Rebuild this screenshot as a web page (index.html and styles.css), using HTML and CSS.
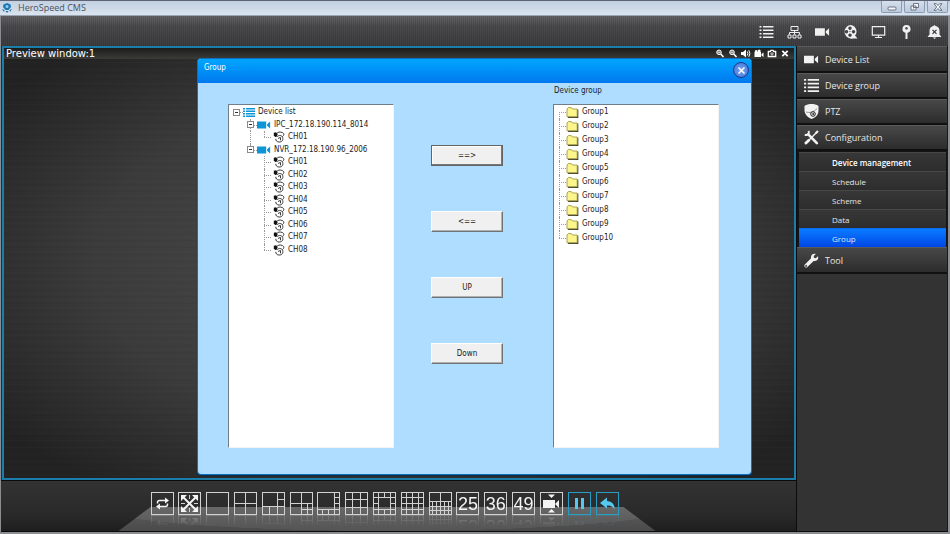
FILE: index.html
```html
<!DOCTYPE html>
<html lang="en">
<head>
<meta charset="utf-8">
<title>HeroSpeed CMS</title>
<link rel="stylesheet" href="styles.css">
</head>
<body>
<svg class="sprite" aria-hidden="true">
  <symbol id="list" viewBox="0 0 14 14"><path fill="currentColor" d="M0 1h2v1.500H0zM3.500 1H14v1.500H3.500zM0 4.500h2V6H0zM3.500 4.500H14V6H3.500zM0 8h2v1.500H0zM3.500 8H14v1.500H3.500zM0 11.500h2V13H0zM3.500 11.500H14V13H3.500z"/></symbol>
  <symbol id="rows" viewBox="0 0 12 10"><path fill="currentColor" d="M0 1h2v1.500H0zM3 1h9v1.500H3zM0 3.500h2V5H0zM3 3.500h9V5H3zM0 6h2v1.500H0zM3 6h9v1.500H3zM0 8.500h2V10H0zM3 8.500h9V10H3z"/></symbol>
  <symbol id="cam" viewBox="0 0 16 10"><path fill="currentColor" d="M0 1h10.500v8H0zM11.500 4.200L15 1v8l-3.500-3.200z"/></symbol>
  <symbol id="net" viewBox="0 0 14 14"><g fill="none" stroke="currentColor"><path d="M3.500 1.500h7v4h-7zM7 5.500v4M2 9.500V7.500h10v2M.5 10h3v3h-3zM5.500 10h3v3h-3zM10.500 10h3v3h-3z"/></g></symbol>
  <symbol id="reel" viewBox="0 0 14 14"><path fill="currentColor" fill-rule="evenodd" d="M6.500 0a6.500 6.500 0 0 1 5 10.600L14 13.500H9.500A6.500 6.500 0 1 1 6.500 0zM6.500 1.500a1.700 1.700 0 1 0 .01 0zM3 5a1.700 1.700 0 1 0 .01 0zM10 5a1.700 1.700 0 1 0 .01 0zM6.500 8.400a1.700 1.700 0 1 0 .01 0zM6.500 5.900a.6.600 0 1 0 .01 0z"/></symbol>
  <symbol id="screen" viewBox="0 0 14 14"><path fill="none" stroke="currentColor" stroke-width="1.200" d="M.8 1.600h12.400v8.600H.8zM7 10v2M3.500 12.500h7"/></symbol>
  <symbol id="pin" viewBox="0 0 14 14"><path fill="currentColor" fill-rule="evenodd" d="M7 0a3.900 3.900 0 0 1 1 7.700V14H6V7.700A3.900 3.900 0 0 1 7 0zM7 2a1.300 1.300 0 1 0 .01 0z"/></symbol>
  <symbol id="bell" viewBox="0 0 14 14"><path fill="currentColor" d="M7 0l1.200 1C11 1.500 12 3.500 12 6v3.500L14 12H0l2-2.500V6c0-2.500 1-4.500 3.800-5zM5.200 12.500h3.600L7 14z"/><path stroke="#333" stroke-width="1.200" d="M5 4.800l4 4M9 4.800l-4 4"/></symbol>
  <symbol id="dome" viewBox="0 0 14 15"><path fill="currentColor" d="M0 2C2 .5 4.500 0 7 0s5 .5 7 2v4c0 4-2 7.500-7 9C3 13.500 0 10 0 6z"/><path fill="none" stroke="#777" stroke-width=".8" d="M1.500 8C5 9 9 8.500 12.500 4.500"/><circle cx="8.500" cy="10" r="2.300" fill="#eee" stroke="#222"/><circle cx="8.700" cy="10" r=".9" fill="#222"/></symbol>
  <symbol id="tools" viewBox="0 0 14 14"><path stroke="currentColor" stroke-width="2.400" stroke-linecap="round" d="M4 4l8 8.300"/><path stroke="currentColor" stroke-width="1.300" d="M5 9L11.500 2.500"/><path stroke="currentColor" stroke-width="2.600" stroke-linecap="round" d="M1.800 12.200l2.700-2.600"/><path fill="none" stroke="currentColor" stroke-width="1.800" d="M4.300.8c.9 3-.8 4.400-3.600 3.600"/><path stroke="currentColor" stroke-width="2" d="M11 3l2-2"/></symbol>
  <symbol id="wrench" viewBox="0 0 14 14"><path fill="currentColor" d="M12.900 3L11 4.800 9.300 4.500 9 2.900 11 1C8.500 0 6 2 6.600 5L.8 10.700c-1.400 1.500.8 3.900 2.400 2.400L9 7.400c3.200.6 5.200-2 3.900-4.400zM2 12.800a.8.800 0 1 1 .01 0z"/></symbol>
  <symbol id="zin" viewBox="0 0 9 9"><circle cx="3.500" cy="3.300" r="2.300" fill="#777" stroke="currentColor"/><path stroke="currentColor" stroke-width="1.600" d="M5.200 5L8 8"/><path stroke="currentColor" stroke-width=".8" d="M2.200 3.300h2.600"/></symbol>
  <symbol id="sound" viewBox="0 0 10 9"><path fill="currentColor" d="M0 3h2L5 .5v8L2 6H0z"/><path fill="none" stroke="currentColor" d="M6.300 2.500q1.200 2 0 4M7.800 1.200q2.200 3.300 0 6.600"/></symbol>
  <symbol id="rec" viewBox="0 0 9 9"><path fill="currentColor" d="M0 3h6.500v5H0zM7 5l2-1.500v4.500L7 6.500z"/><circle cx="1.700" cy="2.300" r="1.300" fill="currentColor"/><circle cx="4.700" cy="2.100" r="1.500" fill="currentColor"/></symbol>
  <symbol id="photo" viewBox="0 0 9 9"><path fill="none" stroke="currentColor" stroke-width="1.300" d="M.8 2.500h2l.6-1.200h2.200l.6 1.200h2v5H.8z"/><circle cx="4.500" cy="4.900" r="1.100" fill="none" stroke="currentColor" stroke-width=".8"/></symbol>
  <symbol id="cross" viewBox="0 0 9 9"><path stroke="currentColor" stroke-width="1.800" d="M1.800 1.800l5.400 5.400M7.200 1.800L1.800 7.200"/></symbol>
  <symbol id="chan" viewBox="0 0 12 12"><g fill="none" stroke="#222" stroke-width=".9"><path d="M3.500 3C4.500.8 7 .6 9.500 1.600c2 .9 1.500 3 0 3.900"/><path d="M4 5.800C6 3.600 9 4.200 9.700 6.500c.8 3-1.200 4.700-3.700 4.500-2.300-.1-3.300-1.500-3.200-3.200"/><path d="M5 7.500l2.500-1.200M7.500 6.500v2.800"/></g><path fill="#111" d="M.8 1.800l2.400-.6 1.300 2.300-.8 2.300-1.500.2L.8 4.500z"/></symbol>
  <symbol id="folder" viewBox="0 0 12 11"><path fill="#333" d="M2 2.500h9.800V11H1.500z"/><path fill="#fbf58c" stroke="#a19a45" stroke-width=".9" d="M.5 2L1.800.6h3L6 2h4.700v7.800H.5z"/></symbol>
</svg>

<header class="titlebar">
  <svg class="logo" viewBox="0 0 10 10"><path fill="#1b76b5" d="M5 0l3.500 1.500L9 4 6.500 7h-3L1 4l.5-2.500z"/><circle cx="5" cy="3.500" r="1.500" fill="#8fd0f5"/><path fill="#1b76b5" d="M0 6l2.500 1L2 9zM10 6L7.500 7 8 9zM3.500 8h3L5 10z"/></svg>
  <h1>HeroSpeed CMS</h1>
  <div class="winbtns">
    <button aria-label="Minimize"><svg viewBox="0 0 10 8"><rect x="1" y="4" width="8" height="3" rx="1"/></svg></button>
    <button aria-label="Restore"><svg viewBox="0 0 10 8"><path d="M3.500.5h5v4h-5zM1 3h5v4H1zM3 5h1"/></svg></button>
    <button aria-label="Close"><svg viewBox="0 0 10 8"><path d="M1 .7h2.300L5 2.500 6.700.7H9L6.300 4 9 7.300H6.700L5 5.500 3.300 7.300H1L3.700 4z"/></svg></button>
  </div>
</header>

<div class="app">
  <nav class="topbar" aria-label="Main">
    <button aria-label="List"><svg><use href="#list"/></svg></button>
    <button aria-label="Network"><svg><use href="#net"/></svg></button>
    <button aria-label="Camera"><svg><use href="#cam"/></svg></button>
    <button aria-label="Playback"><svg><use href="#reel"/></svg></button>
    <button aria-label="Monitor"><svg><use href="#screen"/></svg></button>
    <button aria-label="Map"><svg><use href="#pin"/></svg></button>
    <button aria-label="Alarm"><svg><use href="#bell"/></svg></button>
  </nav>

  <div class="workspace">
    <main class="stage">
      <section class="preview">
        <header class="preview-head">
          <h2>Preview window:1</h2>
          <div class="preview-tools">
            <button aria-label="Zoom in"><svg><use href="#zin"/></svg></button>
            <button aria-label="Zoom out"><svg><use href="#zin"/></svg></button>
            <button aria-label="Sound"><svg><use href="#sound"/></svg></button>
            <button aria-label="Record"><svg><use href="#rec"/></svg></button>
            <button aria-label="Snapshot"><svg><use href="#photo"/></svg></button>
            <button aria-label="Close preview"><svg><use href="#cross"/></svg></button>
          </div>
        </header>
      </section>

      <footer class="dock">
        <div class="layouts">
          <button aria-label="Cycle"><svg viewBox="0 0 23 23"><path class="mid-stroke" d="M6.500 11.500v-1q0-2 2-2h7M16.500 11.500v1q0 2-2 2h-7"/><path class="solid" d="M14 5.500l4 3-4 3zM9 11.500l-4 3 4 3z"/></svg></button>
          <button aria-label="Full screen"><svg viewBox="0 0 23 23"><path class="thick" d="M5 5l13 13M18 5L5 18"/><path class="solid" d="M3 3h6L3 9zM20 3v6L14 3zM3 20v-6l6 6zM20 20h-6l6-6z"/><path d="M11.500 3v4M11.500 16v4M3 11.500h4M16 11.500h4"/></svg></button>
          <button aria-label="1 window"></button>
          <button aria-label="4 windows"><svg viewBox="0 0 23 23"><path d="M11.500 0v23M0 11.500h23"/></svg></button>
          <button aria-label="6 windows"><svg viewBox="0 0 23 23"><path d="M15.500 0v23M0 14.500h23M7.500 14.500V23M15.500 7.500H23"/></svg></button>
          <button aria-label="7 windows"><svg viewBox="0 0 23 23"><path d="M11.500 0v23M0 11.500h23M17.500 11.500V23M11.500 17.500H23"/></svg></button>
          <button aria-label="8 windows"><svg viewBox="0 0 23 23"><path d="M17.500 0v23M0 17.500h23M5.500 17.500V23M11.500 17.500V23M17.500 5.500H23M17.500 11.500H23"/></svg></button>
          <button aria-label="9 windows"><svg viewBox="0 0 23 23"><path d="M7.500 0v23M15.500 0v23M0 7.500h23M0 15.500h23"/></svg></button>
          <button aria-label="13 windows"><svg viewBox="0 0 23 23"><path d="M5.500 0v23M17.500 0v23M0 5.500h23M0 17.500h23M11.500 0v5.500M11.500 17.500V23M0 11.500h5.500M17.500 11.500H23"/></svg></button>
          <button aria-label="16 windows"><svg viewBox="0 0 23 23"><path d="M5.500 0v23M11.500 0v23M17.500 0v23M0 5.500h23M0 11.500h23M0 17.500h23"/></svg></button>
          <button aria-label="20 windows"><svg viewBox="0 0 23 23"><path d="M11.500 0v23M0 9.500h23M0 14.500h23M0 18.500h23M3.500 9.500V23M7.500 9.500V23M15.500 9.500V23M19.500 9.500V23"/></svg></button>
          <button>25</button>
          <button>36</button>
          <button>49</button>
          <button aria-label="Camera tilt"><svg viewBox="0 0 23 23"><path class="solid" d="M3 8h12v8H3zM15 12l4-4v8zM8 2.500h7L11.500 6zM8 20.500h7L11.500 17z"/></svg></button>
          <button class="blue" aria-label="Pause"><svg viewBox="0 0 23 23"><path class="solid" d="M7 6h3v11H7zM13 6h3v11h-3z"/></svg></button>
          <button class="blue" aria-label="Back"><svg viewBox="0 0 23 23"><path class="solid" d="M4 11l7-5.500V9q8 .5 7.500 8.500Q16 13 11 13.500v3z"/></svg></button>
        </div>
      </footer>
    </main>

    <aside class="sidebar">
      <a class="entry" href="#"><svg class="wide"><use href="#cam"/></svg>Device List</a>
      <a class="entry" href="#"><svg><use href="#list"/></svg>Device group</a>
      <a class="entry" href="#"><svg><use href="#dome"/></svg>PTZ</a>
      <a class="entry" href="#"><svg><use href="#tools"/></svg>Configuration</a>
      <div class="submenu">
        <a class="strong" href="#">Device management</a>
        <a href="#">Schedule</a>
        <a href="#">Scheme</a>
        <a href="#">Data</a>
        <a class="current" href="#" aria-current="page">Group</a>
      </div>
      <a class="entry" href="#"><svg><use href="#wrench"/></svg>Tool</a>
    </aside>
  </div>
</div>

<div class="dialog" role="dialog" aria-labelledby="dialog-title">
  <header class="dialog-head">
    <h2 id="dialog-title">Group</h2>
    <button class="close" aria-label="Close dialog"><svg viewBox="0 0 9 9"><path d="M1.500 1.500l6 6M7.500 1.500l-6 6"/></svg></button>
  </header>
  <div class="dialog-body">
    <h3 id="group-label">Device group</h3>
    <ul class="tree devices">
      <li><span class="cell"><button class="minus" aria-label="Collapse"></button></span><svg class="ico root"><use href="#rows"/></svg>Device list</li>
      <li><span class="cell gap"></span><span class="cell mid"><button class="minus" aria-label="Collapse"></button></span><svg class="ico"><use href="#cam"/></svg>IPC_172.18.190.114_8014</li>
      <li><span class="cell gap"></span><span class="cell line"></span><span class="cell last"></span><svg class="ico chan"><use href="#chan"/></svg>CH01</li>
      <li><span class="cell gap"></span><span class="cell last"><button class="minus" aria-label="Collapse"></button></span><svg class="ico"><use href="#cam"/></svg>NVR_172.18.190.96_2006</li>
      <li><span class="cell gap"></span><span class="cell gap"></span><span class="cell mid"></span><svg class="ico chan"><use href="#chan"/></svg>CH01</li>
      <li><span class="cell gap"></span><span class="cell gap"></span><span class="cell mid"></span><svg class="ico chan"><use href="#chan"/></svg>CH02</li>
      <li><span class="cell gap"></span><span class="cell gap"></span><span class="cell mid"></span><svg class="ico chan"><use href="#chan"/></svg>CH03</li>
      <li><span class="cell gap"></span><span class="cell gap"></span><span class="cell mid"></span><svg class="ico chan"><use href="#chan"/></svg>CH04</li>
      <li><span class="cell gap"></span><span class="cell gap"></span><span class="cell mid"></span><svg class="ico chan"><use href="#chan"/></svg>CH05</li>
      <li><span class="cell gap"></span><span class="cell gap"></span><span class="cell mid"></span><svg class="ico chan"><use href="#chan"/></svg>CH06</li>
      <li><span class="cell gap"></span><span class="cell gap"></span><span class="cell mid"></span><svg class="ico chan"><use href="#chan"/></svg>CH07</li>
      <li><span class="cell gap"></span><span class="cell gap"></span><span class="cell last"></span><svg class="ico chan"><use href="#chan"/></svg>CH08</li>
    </ul>
    <div class="actions">
      <button class="default">==&gt;</button>
      <button>&lt;==</button>
      <button>UP</button>
      <button>Down</button>
    </div>
    <ul class="tree groups" aria-labelledby="group-label">
      <li><span class="cell first"></span><svg class="ico"><use href="#folder"/></svg>Group1</li>
      <li><span class="cell mid"></span><svg class="ico"><use href="#folder"/></svg>Group2</li>
      <li><span class="cell mid"></span><svg class="ico"><use href="#folder"/></svg>Group3</li>
      <li><span class="cell mid"></span><svg class="ico"><use href="#folder"/></svg>Group4</li>
      <li><span class="cell mid"></span><svg class="ico"><use href="#folder"/></svg>Group5</li>
      <li><span class="cell mid"></span><svg class="ico"><use href="#folder"/></svg>Group6</li>
      <li><span class="cell mid"></span><svg class="ico"><use href="#folder"/></svg>Group7</li>
      <li><span class="cell mid"></span><svg class="ico"><use href="#folder"/></svg>Group8</li>
      <li><span class="cell mid"></span><svg class="ico"><use href="#folder"/></svg>Group9</li>
      <li><span class="cell last"></span><svg class="ico"><use href="#folder"/></svg>Group10</li>
    </ul>
  </div>
</div>
</body>
</html>
```
FILE: styles.css
```css
* { box-sizing: border-box; }

body {
  margin: 0;
  height: 100vh;
  display: flex;
  flex-direction: column;
  overflow: hidden;
  background: #8b8d90;
  color: #e6e6e6;
  font-family: "Noto Sans", sans-serif;
  font-size: 9px;
}

h1, h2, h3, ul { margin: 0; padding: 0; font-weight: normal; }
ul { list-style: none; }
a { color: inherit; text-decoration: none; }
button { margin: 0; padding: 0; border: 0; background: none; color: inherit; font: inherit; }
.sprite { position: absolute; width: 0; height: 0; }

/* window frame */
.titlebar {
  display: flex;
  align-items: center;
  height: 16px;
  padding-left: 2px;
  border-top: 1px solid #5e6474;
  border-bottom: 1px solid #9aa5b3;
  background: linear-gradient(#c3d0e1, #dae4f0);
  color: #46505e;
}
.logo { width: 10px; height: 10px; margin-right: 6px; }
.titlebar h1 { flex: 1; font-size: 9px; line-height: 14px; font-family: "Open Sans", sans-serif; }
.winbtns { display: flex; gap: 2px; align-self: flex-start; padding-right: 2px; }
.winbtns button {
  display: grid;
  place-items: center;
  width: 21px;
  height: 12px;
  border: 1px solid #8d9bb0;
  border-top: 0;
  border-radius: 0 0 2px 2px;
  background: linear-gradient(#d6e0ed, #bccade);
}
.winbtns svg { width: 10px; height: 8px; fill: #f4f6f9; stroke: #535d6c; stroke-width: .8; }

.app {
  flex: 1;
  display: flex;
  flex-direction: column;
  min-height: 0;
  margin: 0 2px 2px 1px;
  background: #0c0c0c;
}

.topbar {
  display: flex;
  justify-content: flex-end;
  flex: none;
  height: 30px;
  background:
    repeating-linear-gradient(90deg, rgba(0, 0, 0, .12) 0 1px, transparent 1px 2px),
    linear-gradient(#646466, #4b4b4d 35%, #3e3e40);
}
.topbar button { display: grid; place-items: center; width: 28px; padding: 1px 0 0 1px; color: #f0f0f0; }
.topbar svg { width: 15px; height: 14px; }

.workspace { flex: 1; display: flex; min-height: 0; }
.stage { flex: 1; display: flex; flex-direction: column; min-width: 0; background: #2b2b2b; }

/* preview area */
.preview {
  flex: 1;
  border: 2px solid #1b7eaa;
  margin-left: 1px;
  background:
    repeating-linear-gradient(rgba(255, 255, 255, .012) 0 1px, transparent 1px 3px, rgba(0, 0, 0, .04) 3px 4px, transparent 4px 7px),
    radial-gradient(ellipse at center, #464646 20%, #3b3b3b 55%, #222 90%);
}
.preview-head {
  display: flex;
  justify-content: space-between;
  align-items: center;
  height: 11px;
  background: linear-gradient(#1c1c1c, #3b3b37);
}
.preview-head h2 { padding-left: 2px; font: 10px/11px "DejaVu Sans", sans-serif; color: #fff; }
.preview-tools { display: flex; gap: 3px; padding-right: 4px; color: #fff; }
.preview-tools button { display: grid; width: 10px; height: 9px; }
.preview-tools svg { width: 10px; height: 9px; }

/* layout dock */
.dock {
  flex: none;
  position: relative;
  height: 52px;
  display: flex;
  justify-content: center;
  padding: 11px 28px 0 0;
  border-top: 1px solid #0b0b0b;
  border-bottom: 1px solid #0b0b0b;
  background: linear-gradient(#333, #292929 70%, #1e1e1e);
}
.dock::before {
  content: "";
  position: absolute;
  bottom: 0;
  left: calc(50% - 280px);
  width: 537px;
  height: 24px;
  clip-path: polygon(32px 0, 505px 0, 100% 100%, 0 100%);
  background:
    radial-gradient(ellipse 290px 24px at 50% 0, rgba(255, 255, 255, .06) 99%, transparent),
    linear-gradient(#5e5e5e, #4a4a4a);
}
.layouts { position: relative; display: flex; justify-content: space-between; width: 468px; height: 23px; }
.layouts button {
  width: 23px;
  height: 23px;
  border: 1px solid #d2d2d2;
  color: #f4f4f4;
  font: 18px/20px "Liberation Sans", sans-serif;
  -webkit-box-reflect: below 0 linear-gradient(transparent 50%, rgba(0, 0, 0, .25));
}
.layouts svg { display: block; width: 23px; height: 23px; margin: -1px; fill: none; stroke: #d2d2d2; }
.layouts .thick { stroke: #f4f4f4; stroke-width: 2; }
.layouts .mid-stroke { stroke: #f4f4f4; stroke-width: 1.5; }
.layouts .solid { fill: #f4f4f4; stroke: none; }
.layouts .blue { border-color: #2b9cc4; }
.layouts .blue .solid { fill: #57c8f0; }

/* sidebar */
.sidebar {
  flex: none;
  width: 152px;
  background: #333;
  border-left: 1px solid #0b0b0b;
  border-bottom: 1px solid #0b0b0b;
  border-right: 1px solid #1a1a1a;
  font-family: "Open Sans", sans-serif;
}
.entry {
  display: flex;
  align-items: center;
  gap: 6px;
  height: 27px;
  padding-left: 7px;
  border-top: 1px solid #5a5a5a;
  border-bottom: 2px solid #101010;
  background: linear-gradient(#484848, #2c2c2c);
  font-size: 9px;
}
.entry + .entry { height: 26px; }
.entry svg { width: 15px; height: 15px; color: #f2f2f2; }
.submenu { display: grid; grid-auto-rows: 1fr; height: 96px; padding: 1px 1px 0 2px; background: #151515; }
.submenu a {
  display: flex;
  align-items: center;
  padding-left: 33px;
  border-top: 1px solid #484848;
  background: linear-gradient(#373737, #2d2d2d);
  font-size: 8px;
}
.submenu .strong { color: #fff; font-weight: 600; }
.submenu .current { border-top-color: #0a6cf0; background: linear-gradient(#0a7cff, #0046e6); color: #dce9ff; }

/* group dialog */
.dialog {
  position: absolute;
  inset: 58px 198px 59px 197px;
  display: flex;
  flex-direction: column;
  border: 1px solid #0f6fc0;
  border-radius: 4px;
  background: #aeddff;
  box-shadow: 0 1px 1px #0c2c4a;
  color: #1c1c1c;
  font-family: "DejaVu Sans Condensed", sans-serif;
  font-size: 8px;
}
.dialog-head {
  display: flex;
  justify-content: space-between;
  height: 24px;
  padding: 0 2px 0 6px;
  border-radius: 3px 3px 0 0;
  background: linear-gradient(#00a6ff, #0078ee);
  color: #fff;
}
.dialog-head h2 { font-size: 8px; line-height: 18px; }
.close {
  display: grid;
  place-items: center;
  width: 16px;
  height: 16px;
  margin-top: 3px;
  border: 1px solid #20388c;
  border-radius: 50%;
  background: radial-gradient(#78a8f4, #3f6fd0);
}
.close svg { width: 9px; height: 9px; stroke: #fff; stroke-width: 1.5; }
.dialog-body {
  flex: 1;
  display: grid;
  grid-template: 21px 1fr / 166fr 159fr 166fr;
  padding: 0 32px 26px 30px;
}
.dialog-body h3 { grid-column: 3; padding-left: 1px; font-size: 8px; line-height: 16px; }
.tree {
  display: grid;
  align-content: start;
  border: 1px solid #6e7f8c;
  border-right-color: #f4f4f4;
  border-bottom-color: #f4f4f4;
  background: #fff;
}
.devices { grid-column: 1; grid-template-rows: repeat(12, 1fr); padding: 1px 0 191px; align-content: stretch; }
.groups { grid-auto-rows: 14px; }
.tree li { display: flex; align-items: center; min-height: 0; line-height: 12px; white-space: nowrap; }
.ico { flex: none; width: 14px; height: 10px; margin-right: 3px; color: #0e95d8; }
.root { width: 12px; }
.chan { width: 12px; height: 12px; margin: 0 3px 0 2px; }
.groups .ico { width: 13px; height: 11px; margin-right: 3px; }

.cell { position: relative; align-self: stretch; display: grid; place-items: center; width: 14px; }
.groups .cell { width: 12px; }
.cell::before { content: ""; position: absolute; left: 7px; top: 0; bottom: 0; border-left: 1px dotted #999; }
.cell::after { content: ""; position: absolute; left: 7px; right: 0; top: 50%; border-top: 1px dotted #999; }
.groups .cell::before, .groups .cell::after { left: 5px; }
.last::before { bottom: 50%; }
.first::before { top: 50%; }
.gap::before, .gap::after, .line::after, .devices li:first-child .cell::before { display: none; }
.minus {
  position: relative;
  z-index: 1;
  width: 7px;
  height: 7px;
  border: 1px solid #8a8a8a;
  background: linear-gradient(#333, #333) center / 3px 1px no-repeat #fff;
}

.actions { display: flex; flex-direction: column; gap: 45px; padding: 41px 0 0 37px; }
.actions button {
  width: 72px;
  height: 21px;
  border: 1px solid;
  border-color: #fff #6f7478 #6f7478 #fff;
  background: #f0f0f0;
  box-shadow: inset -1px -1px #b0b0b0;
}
.actions .default { border-color: #646464; box-shadow: inset -1px -1px #777, inset 1px 1px #fff; }
```
